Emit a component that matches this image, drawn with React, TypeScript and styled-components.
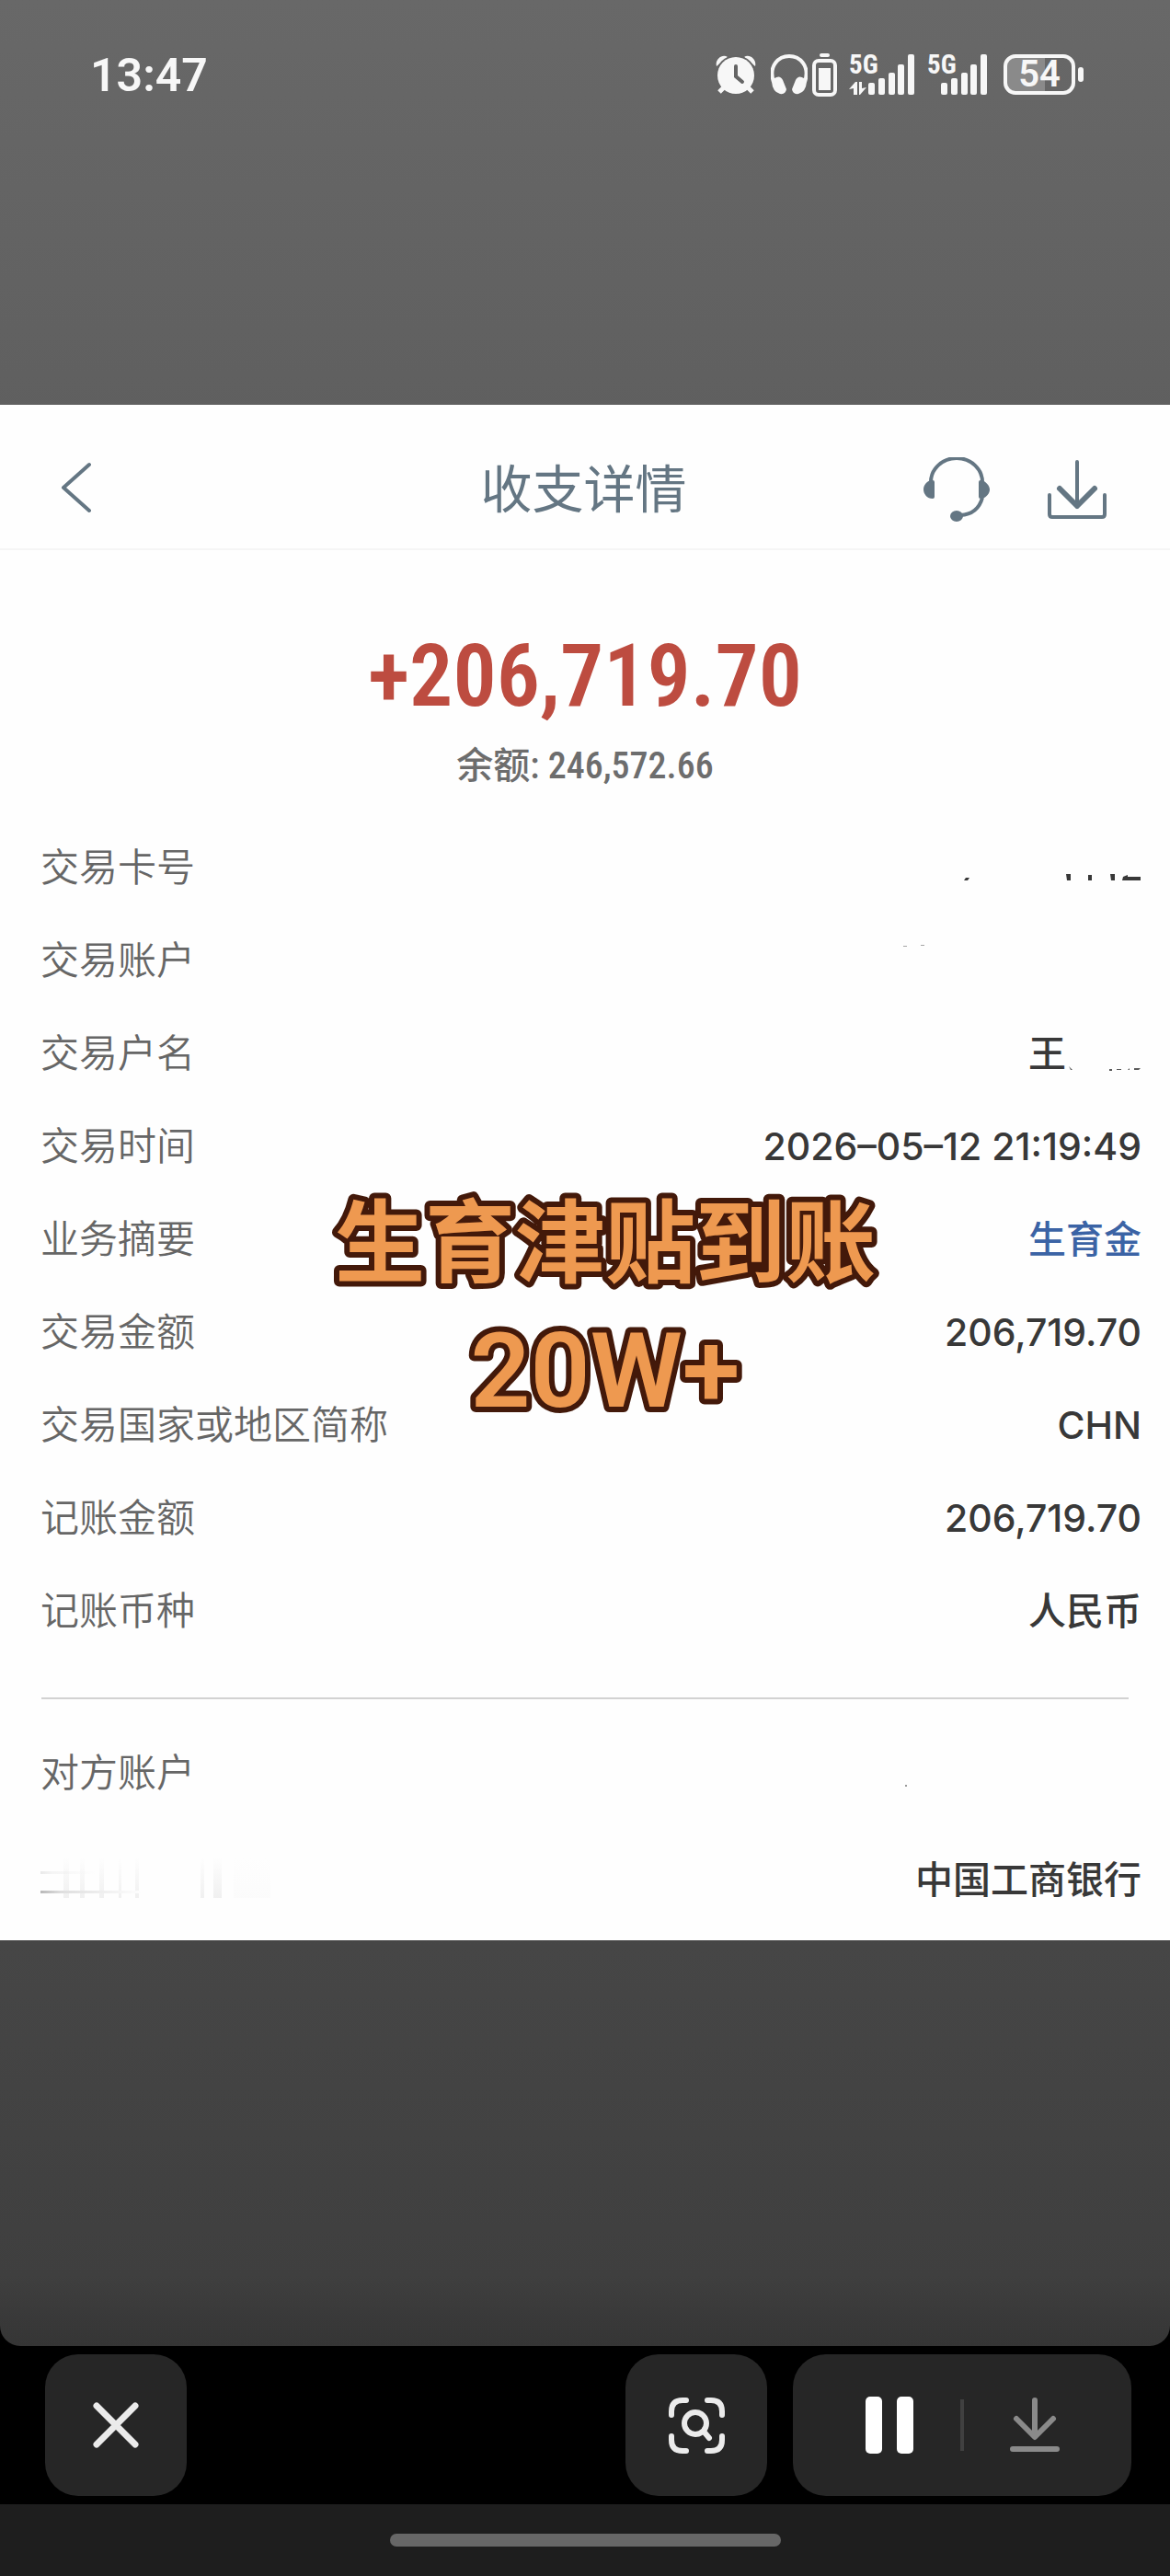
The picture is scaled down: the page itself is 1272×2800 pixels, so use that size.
import React from "react";
import styled, { createGlobalStyle } from "styled-components";

const cjk = `"Noto Sans CJK SC", sans-serif`;
const body = `Inter, ${cjk}`;
const narrow = `"Liberation Sans Narrow", "Roboto Condensed", Roboto, ${cjk}`;

const GlobalStyle = createGlobalStyle`
  *, *::before, *::after { box-sizing: border-box; }
  body { margin: 0; background: #000; font-family: ${body}; }
  button { border: 0; padding: 0; background: none; font: inherit; color: inherit; cursor: pointer; }
  dl, dd, dt, p, h1 { margin: 0; }
  svg { display: block; }
`;

const Page = styled.div`
  display: flex;
  flex-direction: column;
  min-height: 100vh;
`;

const Backdrop = styled.main`
  flex: 1;
  border-radius: 0 0 22px 22px;
  background: linear-gradient(#686868 0%, #5f5f5f 18%, #464646 83%, #3f3f3f 97%, #353535 100%);
`;

const StatusBar = styled.div`
  display: flex;
  justify-content: space-between;
  height: 440px;
  padding: 51px 94px 0 98px;
  color: #f7f7f7;
`;

const Clock = styled.time`
  font: 600 50px/62px Roboto, sans-serif;
`;

const StatusIcons = styled.div`
  display: flex;
  align-items: center;
  height: 60px;
`;

const StatusItem = styled.span<{ $gap: number }>`
  margin-left: ${(p) => p.$gap}px;
`;

const BatteryLevel = styled.div`
  display: flex;
  align-items: center;
  gap: 3px;
  margin-left: 18px;
`;

const BatteryBody = styled.span`
  display: flex;
  align-items: center;
  justify-content: center;
  width: 78px;
  height: 44px;
  border: 4px solid #f7f7f7;
  border-radius: 13px;
  background: linear-gradient(90deg, #8a8a8a 58%, transparent 58%);
  font: 600 40px/36px Roboto, sans-serif;
`;

const BatteryTip = styled.span`
  width: 6px;
  height: 16px;
  border-radius: 3px;
  background: #f7f7f7;
`;

const Card = styled.section`
  position: relative;
  padding-bottom: 8px;
  background: #fefefe;
`;

const Header = styled.header`
  display: grid;
  grid-template-columns: 1fr auto 1fr;
  align-items: center;
  height: 158px;
  padding: 27px 69px 0 66px;
  border-bottom: 2px solid #f5f5f5;
  color: #647683;
`;

const Title = styled.h1`
  font: 400 56px/80px ${body};
`;

const HeaderActions = styled.div`
  display: flex;
  justify-content: flex-end;
  gap: 63px;
`;

const Summary = styled.div`
  padding: 85px 0 29px;
  text-align: center;
`;

const Amount = styled.p`
  color: #bd4c40;
  font: 600 94px/104px ${narrow};
`;

const Balance = styled.p`
  margin-top: 16px;
  color: #6d6d6d;
  font: 500 40px/60px ${narrow};
`;

const Details = styled.dl<{ $row: number }>`
  padding: 0 31px 0 44px;
  > div { height: ${(p) => p.$row}px; }
`;

const Row = styled.div`
  display: flex;
  align-items: center;
  justify-content: space-between;
`;

const Label = styled.dt`
  color: #666;
  font: 350 42px/60px ${body};
`;

const Value = styled.dd<{ $accent?: boolean }>`
  display: flex;
  align-items: center;
  color: ${(p) => (p.$accent ? "#3b63a5" : "#383838")};
  font: 500 41px/60px ${body};
`;

const Divider = styled.hr`
  height: 2px;
  margin: 44px 45px 22px;
  border: 0;
  background: #d2d2d2;
`;

const Caption = styled.div`
  position: absolute;
  top: 820px;
  left: 0;
  display: flex;
  justify-content: center;
  width: 100%;
  padding-left: 44px;
  pointer-events: none;
`;

const Toolbar = styled.div`
  display: flex;
  align-items: center;
  gap: 28px;
  height: 172px;
  padding: 0 42px 0 49px;
  background: #000;
`;

const ToolButton = styled.button`
  display: flex;
  align-items: center;
  justify-content: center;
  width: 154px;
  height: 154px;
  border-radius: 36px;
  background: #262626;
`;

const Spacer = styled.div`
  flex: 1;
`;

const ToolGroup = styled.div`
  display: flex;
  align-items: center;
  width: 368px;
  height: 154px;
  padding: 0 28px;
  border-radius: 36px;
  background: #262626;
`;

const GroupButton = styled.button`
  display: flex;
  flex: 1;
  align-items: center;
  justify-content: center;
  height: 100%;
`;

const GroupDivider = styled.span`
  width: 4px;
  height: 56px;
  background: #404040;
`;

const NavBar = styled.div`
  display: flex;
  align-items: center;
  justify-content: center;
  height: 78px;
  background: #1e1e1e;
`;

const Handle = styled.span`
  width: 425px;
  height: 14px;
  border-radius: 7px;
  background: #676767;
`;

const AlarmIcon = () => (
  <svg width="44" height="44" viewBox="0 0 44 44">
    <path d="M1 13C-1 6 7-1 13 3ZM43 13C45 6 37-1 31 3Z" fill="#f7f7f7" />
    <circle cx="22" cy="23" r="22" fill="#656565" />
    <path d="M9 36 4 41M35 36l5 5" stroke="#f7f7f7" strokeWidth="5" />
    <circle cx="22" cy="23" r="20" fill="#f7f7f7" />
    <path d="M22 13v11l7 6" fill="none" stroke="#656565" strokeWidth="4" strokeLinecap="round" />
  </svg>
);

const HeadphonesIcon = () => (
  <svg width="40" height="44" viewBox="0 0 40 44">
    <path d="M3 30C-3 12 9 2 20 2s23 10 17 28" fill="none" stroke="#f7f7f7" strokeWidth="4" />
    <path d="M4 26q6-4 9 2l4 10q-1 6-7 5Q2 41 1 30ZM36 26q-6-4-9 2l-4 10q1 6 7 5 8-2 9-13Z" fill="#f7f7f7" />
  </svg>
);

const DeviceBatteryIcon = () => (
  <svg width="27" height="47" viewBox="0 0 27 47">
    <rect x="8" width="11" height="4" rx="2" fill="#f7f7f7" />
    <rect x="2" y="8" width="23" height="37" rx="5" fill="none" stroke="#f7f7f7" strokeWidth="4" />
    <rect x="7" y="16" width="13" height="24" fill="#f7f7f7" />
  </svg>
);

const barTops = [31, 26, 20, 11, 0];

const SignalIcon = ({ start, transfer }: { start: number; transfer?: boolean }) => (
  <svg width={start + 50} height="68" viewBox={`0 -12 ${start + 50} 68`} fill="#f7f7f7">
    <text x="0" y="21" fontFamily={narrow} fontSize="29" fontWeight="700">5G</text>
    {barTops.map((top, i) => (
      <rect key={top} x={start + Math.round(i * 10.8)} y={top} width="7" height={44 - top} rx="2" />
    ))}
    {transfer && <path d="M0 38 7 30h2v14H5v-7ZM11 30h3v7l5-1-7 8h-1Z" />}
  </svg>
);

const BackIcon = () => (
  <svg width="34" height="56" viewBox="0 0 34 56" fill="none" stroke="currentColor" strokeWidth="4" strokeLinecap="round" strokeLinejoin="round">
    <path d="M31 3 3 28l28 25" />
  </svg>
);

const HeadsetIcon = () => (
  <svg width="72" height="70" viewBox="0 0 72 70" fill="currentColor">
    <path d="M8 27a28 26 0 0 1 56 0M64 44Q59 62 40 63" fill="none" stroke="currentColor" strokeWidth="4" />
    <path d="M8 25h2q2 0 2 2v16q0 2-2 2C4 45 0 40 0 35s4-9 8-10ZM62 25h2c4 2 8 6 8 10s-3 8-8 10h-2q-2 0-2-2V27q0-2 2-2Z" />
    <ellipse cx="36" cy="64" rx="7" ry="6" />
  </svg>
);

const SaveIcon = () => (
  <svg width="64" height="64" viewBox="0 0 64 64" fill="none" stroke="currentColor" strokeWidth="4" strokeLinecap="round" strokeLinejoin="round">
    <path d="M2 38v21q0 3 3 3h54q3 0 3-3V38M32 2v49" />
    <path d="m13 31 19 19 19-19" strokeWidth="6" />
  </svg>
);

const CloseIcon = () => (
  <svg width="50" height="50" viewBox="0 0 50 50" stroke="#ebebeb" strokeWidth="7" strokeLinecap="round">
    <path d="m4 4 42 42M46 4 4 46" />
  </svg>
);

const ScanIcon = () => (
  <svg width="61" height="61" viewBox="0 0 61 61" fill="none" stroke="#ebebeb" strokeWidth="6" strokeLinecap="round">
    <path d="M3 19v-4Q3 3 15 3h4M42 3h4q12 0 12 12v4M58 42v4q0 12-12 12h-4M19 58h-4Q3 58 3 46v-4" />
    <circle cx="29" cy="28" r="12" />
    <path d="m39 38 5 6" />
  </svg>
);

const PauseIcon = () => (
  <svg width="52" height="62" viewBox="0 0 52 62" fill="#fff">
    <rect width="18" height="62" rx="5" />
    <rect x="34" width="18" height="62" rx="5" />
  </svg>
);

const DownloadIcon = () => (
  <svg width="54" height="60" viewBox="0 0 54 60" fill="none" stroke="#8a8a8a" strokeWidth="6" strokeLinecap="round" strokeLinejoin="round">
    <path d="M27 3v38M7 23l20 20 20-20M3 56h48" />
  </svg>
);

const MaskedCard = () => (
  <svg width="200" height="40" viewBox="0 0 200 40" fill="#383838">
    <path d="m7 34 2-3h4l-2 3ZM118 27h5v7h-4ZM142 28h4v6h-4ZM166 27h5v7h-4ZM179 34l1-4 5-2v2h14v4Z" />
  </svg>
);

const MaskedAccount = () => (
  <svg width="260" height="40" viewBox="0 0 260 40" fill="#a5a5a5">
    <path d="M1 4h4v1H1ZM20 3h4v1h-4Z" />
  </svg>
);

const MaskedName = () => (
  <svg width="82" height="40" viewBox="0 0 82 40" fill="#5a5a5a">
    <path d="m3 34 4 4H5ZM47 37h3v2h-3ZM55 37h5v1h-5ZM67 38l2-2v2ZM74 36h7l-2 2h-5Z" />
  </svg>
);

const MaskedPeer = () => (
  <svg width="260" height="40" viewBox="0 0 260 40" fill="#777">
    <circle cx="4" cy="34" r="1" />
  </svg>
);

const FadedLabel = () => (
  <svg width="252" height="50" viewBox="0 0 252 50">
    <defs>
      <linearGradient id="streak">
        <stop stopColor="#b8b8b8" />
        <stop offset="0.2" stopColor="#dedede" />
        <stop offset="1" stopColor="#fefefe" />
      </linearGradient>
      <linearGradient id="column" x2="0" y2="1">
        <stop stopColor="#fefefe" />
        <stop offset="1" stopColor="#f0f0f0" />
      </linearGradient>
    </defs>
    <g fill="url(#column)">
      <rect x="25" y="1" width="6" height="44" />
      <rect x="43" y="1" width="5" height="44" />
      <rect x="64" y="1" width="5" height="44" />
      <rect x="85" y="1" width="3" height="44" />
      <rect x="103" y="1" width="4" height="44" />
      <rect x="174" y="1" width="4" height="44" />
      <rect x="188" y="1" width="9" height="44" />
      <rect x="210" y="1" width="40" height="44" opacity="0.2" />
    </g>
    <rect x="0" y="16" width="60" height="3" fill="url(#streak)" opacity="0.3" />
    <rect x="0" y="37" width="110" height="3" fill="url(#streak)" />
  </svg>
);

const CaptionArt = () => (
  <svg
    width="620"
    height="310"
    viewBox="0 0 620 310"
    fill="#ee9950"
    stroke="#43190a"
    strokeWidth="12"
    strokeLinejoin="round"
    paintOrder="stroke"
    textAnchor="middle"
  >
    <text x="310" y="126" fontSize="98" fontWeight="700" fontFamily={cjk}>生育津贴到账</text>
    <text x="310" y="269" fontSize="114" fontWeight="600" fontFamily="Roboto, sans-serif">20W+</text>
  </svg>
);

type Item = { label: React.ReactNode; value: React.ReactNode; accent?: boolean };

const transaction: Item[] = [
  { label: "交易卡号", value: <MaskedCard /> },
  { label: "交易账户", value: <MaskedAccount /> },
  { label: "交易户名", value: <>王<MaskedName /></> },
  { label: "交易时间", value: "2026–05–12 21:19:49" },
  { label: "业务摘要", value: "生育金", accent: true },
  { label: "交易金额", value: "206,719.70" },
  { label: "交易国家或地区简称", value: "CHN" },
  { label: "记账金额", value: "206,719.70" },
  { label: "记账币种", value: "人民币" },
];

const counterparty: Item[] = [
  { label: "对方账户", value: <MaskedPeer /> },
  { label: <FadedLabel />, value: "中国工商银行" },
];

const DetailList = ({ items, row }: { items: Item[]; row: number }) => (
  <Details $row={row}>
    {items.map((item, i) => (
      <Row key={i}>
        <Label>{item.label}</Label>
        <Value $accent={item.accent}>{item.value}</Value>
      </Row>
    ))}
  </Details>
);

export default function App() {
  return (
    <Page>
      <GlobalStyle />
      <Backdrop>
        <StatusBar>
          <Clock>13:47</Clock>
          <StatusIcons>
            <StatusItem $gap={0}><AlarmIcon /></StatusItem>
            <StatusItem $gap={16}><HeadphonesIcon /></StatusItem>
            <StatusItem $gap={5}><DeviceBatteryIcon /></StatusItem>
            <StatusItem $gap={13}><SignalIcon start={21} transfer /></StatusItem>
            <StatusItem $gap={14}><SignalIcon start={15} /></StatusItem>
            <BatteryLevel>
              <BatteryBody>54</BatteryBody>
              <BatteryTip />
            </BatteryLevel>
          </StatusIcons>
        </StatusBar>

        <Card>
          <Header>
            <div>
              <button type="button" aria-label="返回"><BackIcon /></button>
            </div>
            <Title>收支详情</Title>
            <HeaderActions>
              <button type="button" aria-label="客服"><HeadsetIcon /></button>
              <button type="button" aria-label="保存"><SaveIcon /></button>
            </HeaderActions>
          </Header>
          <Summary>
            <Amount>+206,719.70</Amount>
            <Balance>余额: 246,572.66</Balance>
          </Summary>
          <DetailList items={transaction} row={101} />
          <Divider />
          <DetailList items={counterparty} row={116} />
          <Caption><CaptionArt /></Caption>
        </Card>
      </Backdrop>

      <Toolbar>
        <ToolButton type="button" aria-label="关闭"><CloseIcon /></ToolButton>
        <Spacer />
        <ToolButton type="button" aria-label="识图"><ScanIcon /></ToolButton>
        <ToolGroup>
          <GroupButton type="button" aria-label="暂停"><PauseIcon /></GroupButton>
          <GroupDivider />
          <GroupButton type="button" aria-label="下载"><DownloadIcon /></GroupButton>
        </ToolGroup>
      </Toolbar>
      <NavBar><Handle /></NavBar>
    </Page>
  );
}
